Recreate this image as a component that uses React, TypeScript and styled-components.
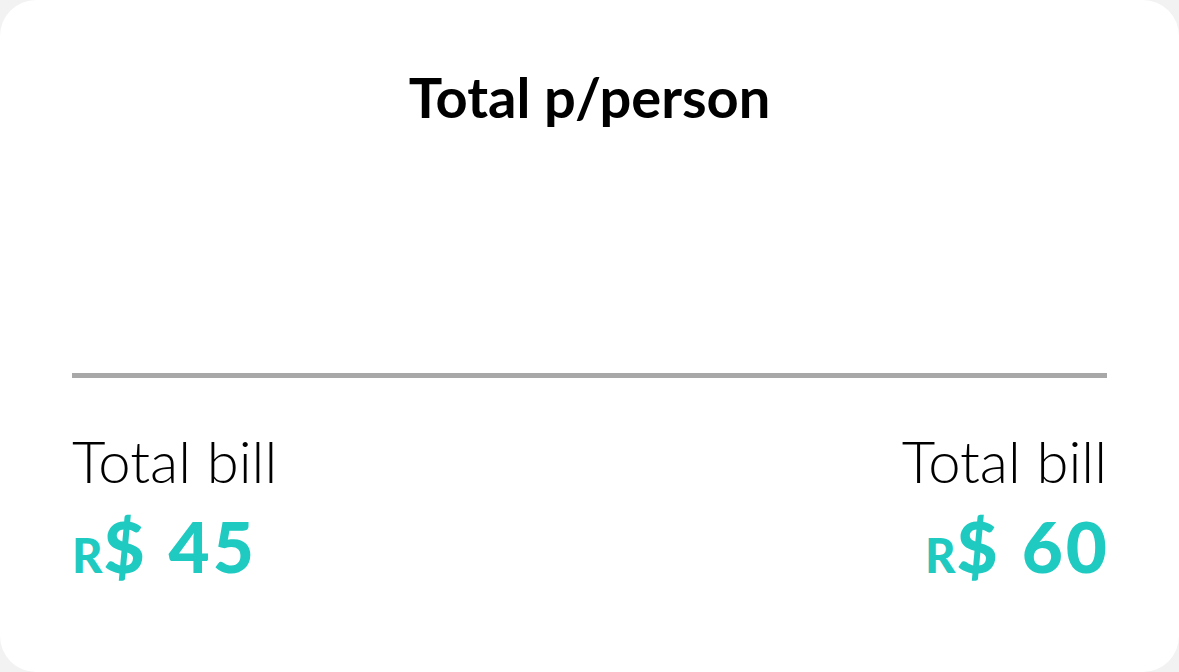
import React from "react";
import styled, { createGlobalStyle } from "styled-components";

const GlobalStyle = createGlobalStyle`
  html, body {
    margin: 0;
    padding: 0;
    background: #f2f2f2;
    font-family: "Lato", "Noto Sans", sans-serif;
  }
`;

const Card = styled.div`
  width: 1179px;
  height: 672px;
  box-sizing: border-box;
  background: #ffffff;
  border-radius: 36px;
  padding: 59px 72px 0;
  display: flex;
  flex-direction: column;
`;

const Title = styled.h1`
  margin: 0;
  text-align: center;
  font-size: 56px;
  font-weight: 700;
  color: #000;
  line-height: 76px;
`;

const Divider = styled.hr`
  margin: 238px 0 0;
  border: none;
  height: 5px;
  background: #a8a8a8;
`;

const Totals = styled.div`
  display: flex;
  justify-content: space-between;
  margin-top: 48px;
`;

interface ColumnProps {
  align: "left" | "right";
}

const Column = styled.div<ColumnProps>`
  display: flex;
  flex-direction: column;
  align-items: ${(p) => (p.align === "right" ? "flex-end" : "flex-start")};
`;

const Label = styled.span`
  font-size: 58px;
  font-weight: 300;
  color: #000;
  line-height: 70px;
`;

const Amount = styled.span`
  margin-top: 5px;
  margin-right: -3px;
  font-size: 71px;
  font-weight: 900;
  color: #1fcac0;
  line-height: 90px;
  letter-spacing: 3px;
  word-spacing: 1px;
`;

const Currency = styled.span`
  font-size: 47px;
  letter-spacing: 1px;
`;

const TotalBlock = ({ align, value }: { align: "left" | "right"; value: string }) => (
  <Column align={align}>
    <Label>Total bill</Label>
    <Amount>
      <Currency>R</Currency>$ {value}
    </Amount>
  </Column>
);

const App = () => {
  return (
    <>
      <GlobalStyle />
      <Card>
        <Title>Total p/person</Title>
        <Divider />
        <Totals>
          <TotalBlock align="left" value="45" />
          <TotalBlock align="right" value="60" />
        </Totals>
      </Card>
    </>
  );
};

export default App;
